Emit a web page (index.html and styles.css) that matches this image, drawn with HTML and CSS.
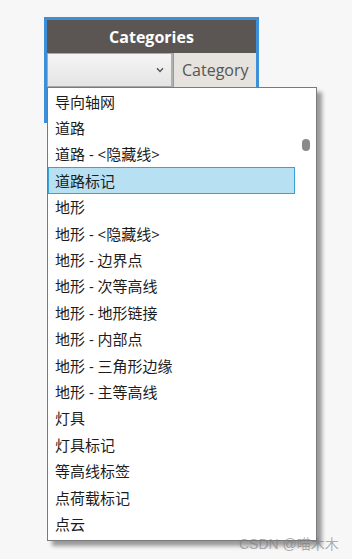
FILE: index.html
```html
<!DOCTYPE html>
<html>
<head>
<meta charset="utf-8">
<link rel="stylesheet" href="styles.css">
</head>
<body>
<div class="node">
  <div class="node-header">Categories</div>
  <div class="node-row">
    <div class="select">
      <svg class="chev" width="8" height="6" viewBox="0 0 8 6"><path d="M1 1.2 L4 4.4 L7 1.2" fill="none" stroke="#555" stroke-width="1.4"/></svg>
    </div>
    <div class="port">Category</div>
  </div>
  <div class="node-body"></div>
  <div class="list">
    <div class="items">
      <div class="item">导向轴网</div>
      <div class="item">道路</div>
      <div class="item">道路 - &lt;隐藏线&gt;</div>
      <div class="item selected">道路标记</div>
      <div class="item">地形</div>
      <div class="item">地形 - &lt;隐藏线&gt;</div>
      <div class="item">地形 - 边界点</div>
      <div class="item">地形 - 次等高线</div>
      <div class="item">地形 - 地形链接</div>
      <div class="item">地形 - 内部点</div>
      <div class="item">地形 - 三角形边缘</div>
      <div class="item">地形 - 主等高线</div>
      <div class="item">灯具</div>
      <div class="item">灯具标记</div>
      <div class="item">等高线标签</div>
      <div class="item">点荷载标记</div>
      <div class="item">点云</div>
    </div>
    <div class="scroll"><div class="thumb"></div></div>
  </div>
</div>
<div class="watermark">CSDN @喵木木</div>
</body>
</html>
```
FILE: styles.css
```css
html, body {
  margin: 0;
  padding: 0;
}
body {
  background: #f7f7f7;
  width: 352px;
  height: 559px;
  overflow: hidden;
  position: relative;
  font-family: "Open Sans", "Noto Sans CJK SC", sans-serif;
}
.node {
  position: relative;
  margin-left: 44px;
  margin-top: 17px;
  width: 209px;
  border: 3px solid #3d8fd8;
  background: #6a6562;
}
.node-header {
  height: 33px;
  background: #5b5654;
  color: #ffffff;
  font-weight: 700;
  font-size: 16px;
  display: flex;
  align-items: center;
  justify-content: center;
}
.node-row {
  display: flex;
  height: 34px;
  gap: 1px;
  background: #9a9a9a;
}
.select {
  width: 126px;
  box-sizing: border-box;
  border: 1px solid #a8a8a8;
  border-right: 2px solid #b0b0b0;
  background: linear-gradient(#f5f5f5, #e4e4e4);
  display: flex;
  align-items: center;
  justify-content: flex-end;
  padding-right: 7px;
}
.chev {
  display: block;
}
.port {
  flex: 1;
  background: #e6e2dd;
  color: #555555;
  font-size: 16px;
  display: flex;
  align-items: center;
  padding-left: 8px;
}
.node-body {
  height: 33px;
}
.list {
  position: absolute;
  left: 0;
  top: 67px;
  width: 270px;
  height: 454px;
  box-sizing: border-box;
  border: 1px solid #7a7a7a;
  background: #ffffff;
  box-shadow: 5px 5px 4px rgba(0, 0, 0, 0.38);
  display: flex;
  overflow: hidden;
}
.items {
  width: 247px;
  display: flex;
  flex-direction: column;
}
.item {
  flex: none;
  height: 26.4px;
  box-sizing: border-box;
  border: 1px solid transparent;
  padding-left: 6px;
  display: flex;
  align-items: center;
  font-size: 15px;
  color: #1c1c1c;
  white-space: nowrap;
}
.item.selected {
  background: #b8e0f3;
  border-color: #3aa0d8;
}
.scroll {
  flex: 1;
  display: flex;
  justify-content: center;
}
.thumb {
  margin-top: 51px;
  margin-left: 1px;
  width: 8px;
  height: 12px;
  border-radius: 4px;
  background: #8a8a8a;
}
.watermark {
  position: absolute;
  left: 239px;
  top: 533px;
  font-family: "Liberation Sans", "Noto Sans CJK SC", sans-serif;
  font-size: 14px;
  color: rgba(120, 120, 120, 0.6);
  white-space: nowrap;
}
```
